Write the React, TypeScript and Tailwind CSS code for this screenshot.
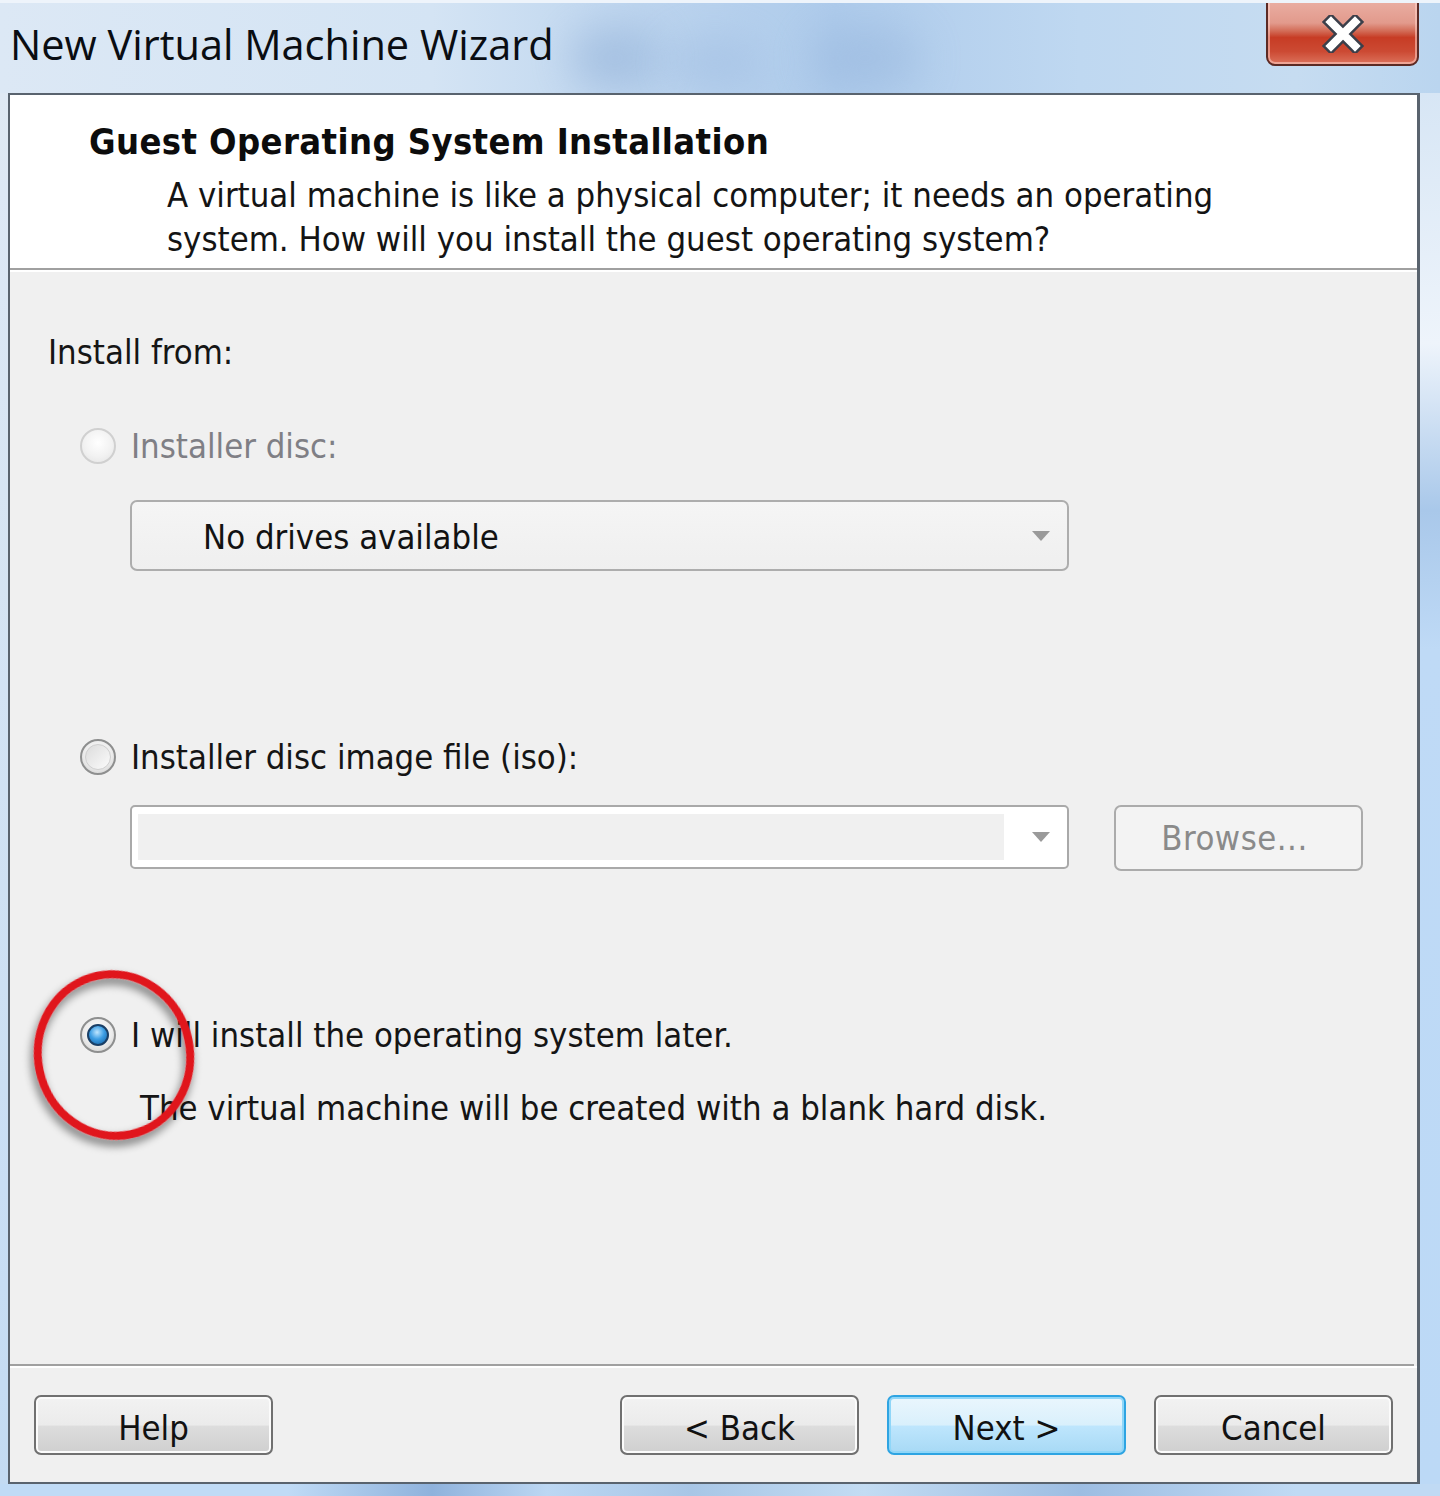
import React from "react";

const body = "font-['DejaVu_Sans_Condensed','DejaVu_Sans',sans-serif] font-stretch-condensed";

function Radio({ state }: { state: "disabled" | "off" | "on" }) {
  if (state === "disabled") {
    return (
      <div className="w-[36px] h-[36px] rounded-full border-2 border-[#d0d0d0] bg-[radial-gradient(circle_at_50%_40%,#ffffff_0%,#f2f2f2_55%,#e2e2e2_100%)] shrink-0" />
    );
  }
  if (state === "off") {
    return (
      <div className="w-[36px] h-[36px] rounded-full border-2 border-[#8e8f8f] bg-[radial-gradient(circle_at_50%_40%,#ffffff_0%,#ececec_55%,#c9c9c9_100%)] shrink-0 flex items-center justify-center">
        <div className="w-[26px] h-[26px] rounded-full border border-[#cfcfcf] bg-[linear-gradient(135deg,#dcdcdc,#fbfbfb)]" />
      </div>
    );
  }
  return (
    <div className="w-[36px] h-[36px] rounded-full border-2 border-[#8e8f8f] bg-[radial-gradient(circle_at_50%_40%,#ffffff_0%,#ececec_55%,#c9c9c9_100%)] shrink-0 flex items-center justify-center">
      <div className="w-[22px] h-[22px] rounded-full border-2 border-[#1a3f66] bg-[radial-gradient(circle_at_45%_35%,#bfe6ff_0%,#3d9ee4_45%,#0d5a9e_100%)]" />
    </div>
  );
}

function Arrow() {
  return (
    <svg width="18" height="10" viewBox="0 0 18 10" className="shrink-0">
      <path d="M0 0 H18 L9 10 Z" fill="#9a9a9a" />
    </svg>
  );
}

function Btn({ label, primary }: { label: string; primary?: boolean }) {
  return (
    <div
      className={
        primary
          ? "w-[239px] h-[60px] rounded-[7px] border-2 border-[#2ea4e2] bg-[linear-gradient(180deg,#eaf6fd_0%,#d9f0fc_50%,#bee6fd_52%,#a7d9f5_100%)] shadow-[inset_0_0_0_2px_#8fd6f8] flex items-center justify-center"
          : "w-[239px] h-[60px] rounded-[7px] border-2 border-[#707070] bg-[linear-gradient(180deg,#f2f2f2_0%,#ebebeb_50%,#dddddd_52%,#cfcfcf_100%)] shadow-[inset_0_0_0_2px_#fbfbfb] flex items-center justify-center"
      }
    >
      <span className={`${body} text-[34.4px] leading-[44px] text-[#111111] pt-[5px]`}>{label}</span>
    </div>
  );
}

export default function App() {
  return (
    <div className="w-[1440px] h-[1496px] relative overflow-hidden bg-[linear-gradient(180deg,#cfe2f5_0%,#bcd8f4_30%,#b9d7f5_100%)] flex flex-col">
      {/* Title bar */}
      <div className="h-[93px] shrink-0 relative overflow-hidden bg-[linear-gradient(90deg,#dce8f5_0%,#d4e4f4_30%,#bcd4ee_45%,#aecbeb_58%,#bfd8f1_75%,#c6dcf1_90%,#bad5ef_100%)] border-t-[3px] border-[#eef4fb] flex items-start">
        <div className="absolute left-[570px] top-[25px] w-[90px] h-[60px] rounded-full bg-[#86a7d2] blur-[20px] opacity-45" />
        <div className="absolute left-[670px] top-[35px] w-[90px] h-[50px] rounded-full bg-[#97b6de] blur-[20px] opacity-40" />
        <div className="absolute left-[810px] top-[25px] w-[110px] h-[60px] rounded-full bg-[#8eaed8] blur-[22px] opacity-40" />
        <span className="relative font-['Open_Sans',sans-serif] text-[41.5px] leading-[56px] text-[#0a0d12] ml-[10px] mt-[13px]">
          New Virtual Machine Wizard
        </span>
        {/* close button */}
        <div className="absolute left-[1266px] top-[-4px] w-[153px] h-[67px] rounded-b-[9px] border-2 border-[#5c2a24] bg-[linear-gradient(180deg,#eaaea3_0%,#e29a8c_35%,#d26a55_48%,#c73c25_58%,#cc4a33_80%,#dc725c_100%)] shadow-[inset_0_0_0_2px_rgba(255,210,200,0.55)] flex items-center justify-center">
          <svg width="44" height="38" viewBox="0 0 44 38" className="mt-[3px]">
            <path d="M10 7 L34 31 M34 7 L10 31" stroke="#3b3f4a" strokeWidth="13" strokeLinecap="square" />
            <path d="M10 7 L34 31 M34 7 L10 31" stroke="#ffffff" strokeWidth="8" strokeLinecap="square" />
          </svg>
        </div>
      </div>

      {/* Dialog body */}
      <div className="flex shrink-0">
        <div className="w-[8px] shrink-0 bg-[linear-gradient(180deg,#dfe9f4,#c3dbf3)]" />
        <div className="w-[1412px] h-[1391px] shrink-0 border-2 border-[#59636e] border-r-[3px] flex flex-col bg-[#f0f0f0]">
          {/* header */}
          <div className="h-[175px] shrink-0 bg-white border-b-2 border-[#a0a0a0] flex flex-col pt-[25px]">
            <div className={`${body} font-bold text-[36px] tracking-[0.4px] leading-[44px] text-[#0c0c0c] pl-[79px]`}>
              Guest Operating System Installation
            </div>
            <div className={`${body} text-[34.4px] leading-[44px] text-[#141414] pl-[157px] mt-[9px]`}>
              A virtual machine is like a physical computer; it needs an operating
              <br />
              system. How will you install the guest operating system?
            </div>
          </div>
          <div className="h-[2px] bg-white shrink-0" />

          {/* content */}
          <div className="flex-1 flex flex-col pt-[58px]">
            <div className={`${body} text-[34.4px] leading-[44px] text-[#151515] pl-[38px]`}>Install from:</div>

            <div className="flex items-center gap-[15px] pl-[70px] mt-[50px] h-[44px]">
              <Radio state="disabled" />
              <span className={`${body} text-[34.4px] leading-[44px] text-[#7f7f85]`}>Installer disc:</span>
            </div>

            <div className="ml-[120px] mt-[32px] w-[939px] h-[71px] rounded-[7px] border-2 border-[#adadad] bg-[linear-gradient(180deg,#f5f5f5,#efefef)] flex items-center pl-[71px] pr-[17px]">
              <span className={`${body} text-[34.4px] leading-[44px] text-[#121212] flex-1 pt-[3px]`}>No drives available</span>
              <Arrow />
            </div>

            <div className="flex items-center gap-[15px] pl-[70px] mt-[164px] h-[44px]">
              <Radio state="off" />
              <span className={`${body} text-[34.4px] leading-[44px] text-[#151515]`}>Installer disc image file (iso):</span>
            </div>

            <div className="flex items-start ml-[120px] mt-[26px] h-[66px]">
              <div className="w-[939px] h-[64px] rounded-[5px] border-2 border-[#a9a9a9] bg-white flex items-center pl-[6px] pr-[17px]">
                <div className="w-[866px] h-[46px] bg-[#f0f0f0]" />
                <div className="flex-1" />
                <Arrow />
              </div>
              <div className="ml-[45px] w-[249px] h-[66px] rounded-[7px] border-2 border-[#ababab] bg-[#f3f3f3] flex items-center justify-center">
                <span className={`${body} text-[34.4px] leading-[44px] text-[#8a8a8a] tracking-[0.5px] pr-[8px]`}>Browse...</span>
              </div>
            </div>

            <div className="flex items-center gap-[15px] pl-[70px] mt-[142px] h-[44px]">
              <Radio state="on" />
              <span className={`${body} text-[34.4px] leading-[44px] text-[#151515]`}>I will install the operating system later.</span>
            </div>

            <div className={`${body} text-[34.4px] leading-[44px] text-[#151515] pl-[130px] mt-[29px]`}>
              The virtual machine will be created with a blank hard disk.
            </div>
          </div>

          {/* footer */}
          <div className="h-[2px] bg-[#a0a0a0] shrink-0 mr-[3px]" />
          <div className="h-[2px] bg-white shrink-0" />
          <div className="h-[114px] shrink-0 flex items-start pt-[27px] px-[24px]">
            <Btn label="Help" />
            <div className="flex-1" />
            <Btn label="< Back" />
            <div className="w-[28px]" />
            <Btn label="Next >" primary />
            <div className="w-[28px]" />
            <Btn label="Cancel" />
          </div>
        </div>
        <div className="flex-1 bg-[linear-gradient(180deg,#d7e6f5_0%,#eef4fb_18%,#a9c8ea_30%,#bfdaf6_40%,#bcd9f6_100%)]" />
      </div>
      <div className="flex-1 bg-[linear-gradient(90deg,#c0dbf6_0%,#c0dbf6_20%,#8fb2dc_30%,#bcd7f3_38%,#a8c6e6_48%,#c3dcf3_60%,#9dbde2_75%,#c0daf4_90%)]" />

      {/* red annotation circle */}
      <svg className="absolute left-[20px] top-[960px]" width="200" height="200" viewBox="0 0 200 200">
        <defs>
          <filter id="sh" x="-30%" y="-30%" width="160%" height="160%">
            <feGaussianBlur in="SourceAlpha" stdDeviation="5" />
            <feOffset dx="-3" dy="5" result="b" />
            <feComponentTransfer>
              <feFuncA type="linear" slope="0.55" />
            </feComponentTransfer>
            <feMerge>
              <feMergeNode />
              <feMergeNode in="SourceGraphic" />
            </feMerge>
          </filter>
        </defs>
        <ellipse cx="94" cy="95" rx="76" ry="81" transform="rotate(-12 94 95)" fill="none" stroke="#e0131c" strokeWidth="8" filter="url(#sh)" />
      </svg>
    </div>
  );
}
